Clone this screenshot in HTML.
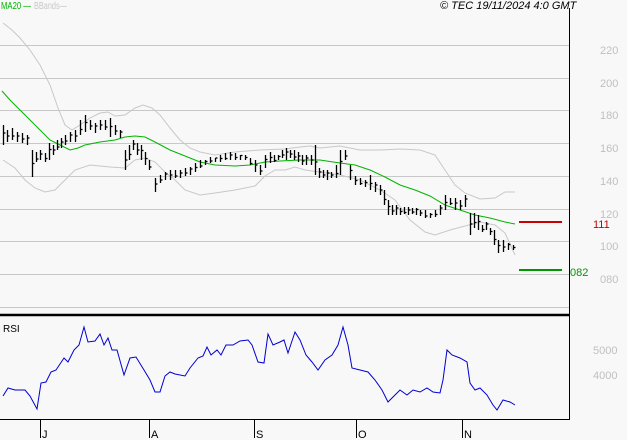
<!DOCTYPE html>
<html><head><meta charset="utf-8">
<style>
html,body{margin:0;padding:0;background:#f8f8f8;}
svg{display:block;font-family:"Liberation Sans",sans-serif;}
</style></head><body>
<svg id="s" width="627" height="440" viewBox="0 0 627 440" xmlns="http://www.w3.org/2000/svg">
<rect width="627" height="440" fill="#f8f8f8"/>
<g stroke="#c8c8c8" stroke-width="1">
<line x1="0" y1="45.5" x2="569" y2="45.5"/>
<line x1="0" y1="78.5" x2="569" y2="78.5"/>
<line x1="0" y1="110.5" x2="569" y2="110.5"/>
<line x1="0" y1="143.5" x2="569" y2="143.5"/>
<line x1="0" y1="176.5" x2="569" y2="176.5"/>
<line x1="0" y1="209.5" x2="569" y2="209.5"/>
<line x1="0" y1="241.5" x2="569" y2="241.5"/>
<line x1="0" y1="274.5" x2="569" y2="274.5"/>
<line x1="0" y1="307.5" x2="569" y2="307.5"/>
</g>
<g fill="none" stroke="#c8c8c8" stroke-width="1">
<polyline points="3,23 12,30 20,38 30,50 40,65 50,85 58,108 65,125 72,130 80,125 90,118 100,113 108,112 115,116 125,115 135,108 143,105 152,108 160,115 170,128 180,140 190,148 200,152 215,155 235,152 260,150 285,149 300,147 310,146 320,148 340,146 360,150 380,150 400,149 420,150 435,155 445,170 455,185 465,193 480,199 495,198 505,192 515,192"/>
<polyline points="3,160 15,168 25,180 35,188 45,192 55,190 65,180 75,170 90,165 110,167 125,168 135,160 145,158 155,162 165,172 175,180 185,190 200,195 215,193 235,190 255,186 265,176 275,170 285,170 295,167 305,170 320,172 340,175 360,180 380,190 395,200 410,220 425,232 435,235 450,230 465,226 480,222 495,225 505,233 515,255"/>
</g>
<polyline fill="none" stroke="#00b400" stroke-width="1" points="2,91 10,100 20,110 30,120 40,130 50,140 60,145 70,150 78,148 85,145 100,142 115,140 125,137 135,136 145,137 155,142 170,150 185,156 200,162 215,165 235,166 250,165 265,162 280,161 300,160 320,160 340,163 355,165 370,170 385,177 400,185 415,190 430,196 445,205 460,210 475,215 490,218 505,222 515,224"/>
<g id="bars" stroke="#000" stroke-width="1.3"></g>
<line x1="519" y1="222" x2="562" y2="222" stroke="#c80000" stroke-width="2"/>
<line x1="519" y1="270" x2="562" y2="270" stroke="#009600" stroke-width="2"/>
<line x1="569.5" y1="8" x2="569.5" y2="420" stroke="#000" stroke-width="1"/>
<line x1="0" y1="315" x2="570" y2="315" stroke="#000" stroke-width="2.5"/>
<line x1="0" y1="419.5" x2="570" y2="419.5" stroke="#000" stroke-width="1"/>
<polyline fill="none" stroke="#0000d2" stroke-width="1" points="3,396 8,388 15,390 25,390 30,396 37,409 41,383 46,382 51,372 56,370 64,358 68,362 74,350 79,345 84,327 88,342 95,341 100,334 104,345 108,338 112,350 117,350 124,375 130,358 136,357 144,370 150,380 155,392 160,392 165,376 170,372 175,374 185,376 190,368 198,358 203,356 207,347 211,355 217,350 221,355 226,345 233,345 240,341 248,340 252,345 258,362 264,363 268,334 273,345 280,342 284,340 288,353 295,332 300,340 306,355 312,362 318,370 325,360 332,355 338,345 343,327 348,345 352,368 360,370 368,372 375,380 382,390 388,402 395,395 400,390 407,395 413,390 420,392 427,388 433,392 440,393 443,380 447,350 452,355 460,358 467,362 470,383 475,390 480,388 487,395 493,405 497,410 503,400 510,402 515,405"/>
<g stroke="#000" stroke-width="1">
<line x1="40.5" y1="420" x2="40.5" y2="438"/>
<line x1="149.5" y1="420" x2="149.5" y2="438"/>
<line x1="254.5" y1="420" x2="254.5" y2="438"/>
<line x1="356.5" y1="420" x2="356.5" y2="438"/>
<line x1="462.5" y1="420" x2="462.5" y2="438"/>
</g>
<g font-size="11" fill="#000">
<text x="42" y="438">J</text>
<text x="151" y="438">A</text>
<text x="256" y="438">S</text>
<text x="358" y="438">O</text>
<text x="464" y="438">N</text>
<text x="3" y="332" font-size="10">RSI</text>
</g>
<text x="1" y="9" font-size="10" fill="#00b400" textLength="30" lengthAdjust="spacingAndGlyphs">MA20 —</text>
<text x="34" y="9" font-size="10" fill="#c8c8c8" textLength="33" lengthAdjust="spacingAndGlyphs">BBands—</text>
<text x="440" y="9" font-size="11" font-style="italic" fill="#000">© TEC 19/11/2024 4:0 GMT</text>
<g font-size="11" fill="#c0c0c0">
<text x="600" y="54">220</text>
<text x="600" y="87">200</text>
<text x="600" y="119">180</text>
<text x="600" y="152">160</text>
<text x="600" y="185">140</text>
<text x="600" y="218">120</text>
<text x="600" y="250">100</text>
<text x="600" y="283">080</text>
<text x="593" y="354">5000</text>
<text x="593" y="379">4000</text>
</g>
<text x="593" y="228" font-size="11" fill="#c80000">111</text>
<text x="570" y="276" font-size="11" fill="#009600">082</text>
</svg>
<script>
var d=[[3,125,145],[7,130,142],[12,128,140],[17,132,142],[22,133,143],[27,135,145],[32,150,177],[36,152,162],[40,150,160],[45,153,162],[49,143,160],[53,145,155],[57,140,150],[61,138,148],[65,135,145],[70,132,142],[75,130,142],[80,120,135],[85,115,132],[90,120,130],[95,123,133],[100,120,130],[105,120,130],[110,118,137],[115,125,135],[120,130,138],[125,150,170],[129,145,160],[133,140,150],[137,143,155],[141,145,160],[145,152,165],[149,160,170],[155,178,192],[160,175,183],[165,172,180],[170,170,180],[175,170,178],[180,170,178],[185,168,176],[190,167,175],[195,163,172],[200,160,168],[205,160,165],[210,157,163],[215,158,162],[220,155,162],[225,153,160],[230,152,160],[235,153,160],[240,155,160],[245,155,160],[250,158,165],[255,160,172],[260,165,175],[265,155,168],[270,152,163],[274,155,162],[278,155,160],[282,150,158],[286,148,160],[290,150,158],[294,150,160],[298,152,162],[302,155,165],[306,155,165],[311,155,165],[315,145,175],[319,168,178],[323,170,178],[327,170,180],[331,172,178],[336,165,178],[340,150,175],[345,150,160],[350,165,180],[355,176,185],[360,178,185],[365,180,187],[370,175,190],[375,182,192],[380,185,195],[384,190,205],[388,200,215],[392,205,215],[396,205,215],[400,208,215],[404,207,214],[408,207,215],[412,208,214],[416,208,215],[420,210,216],[425,210,218],[430,213,218],[435,210,217],[440,205,215],[445,195,210],[450,198,205],[455,198,210],[460,200,210],[465,195,207],[470,213,235],[474,213,228],[478,215,230],[482,225,232],[486,222,230],[490,228,235],[494,230,245],[498,240,253],[503,240,252],[508,243,250],[513,245,250]];
var g=document.getElementById('bars'),h='';
d.forEach(function(b,i){var x=b[0]+0.5,m=(b[1]+b[2])/2+((i*7)%5-2);
h+='<line x1="'+x+'" y1="'+b[1]+'" x2="'+x+'" y2="'+b[2]+'"/>';
h+='<line x1="'+x+'" y1="'+m+'" x2="'+(x+2)+'" y2="'+m+'"/>';});
g.innerHTML=h;
</script>
</body></html>
